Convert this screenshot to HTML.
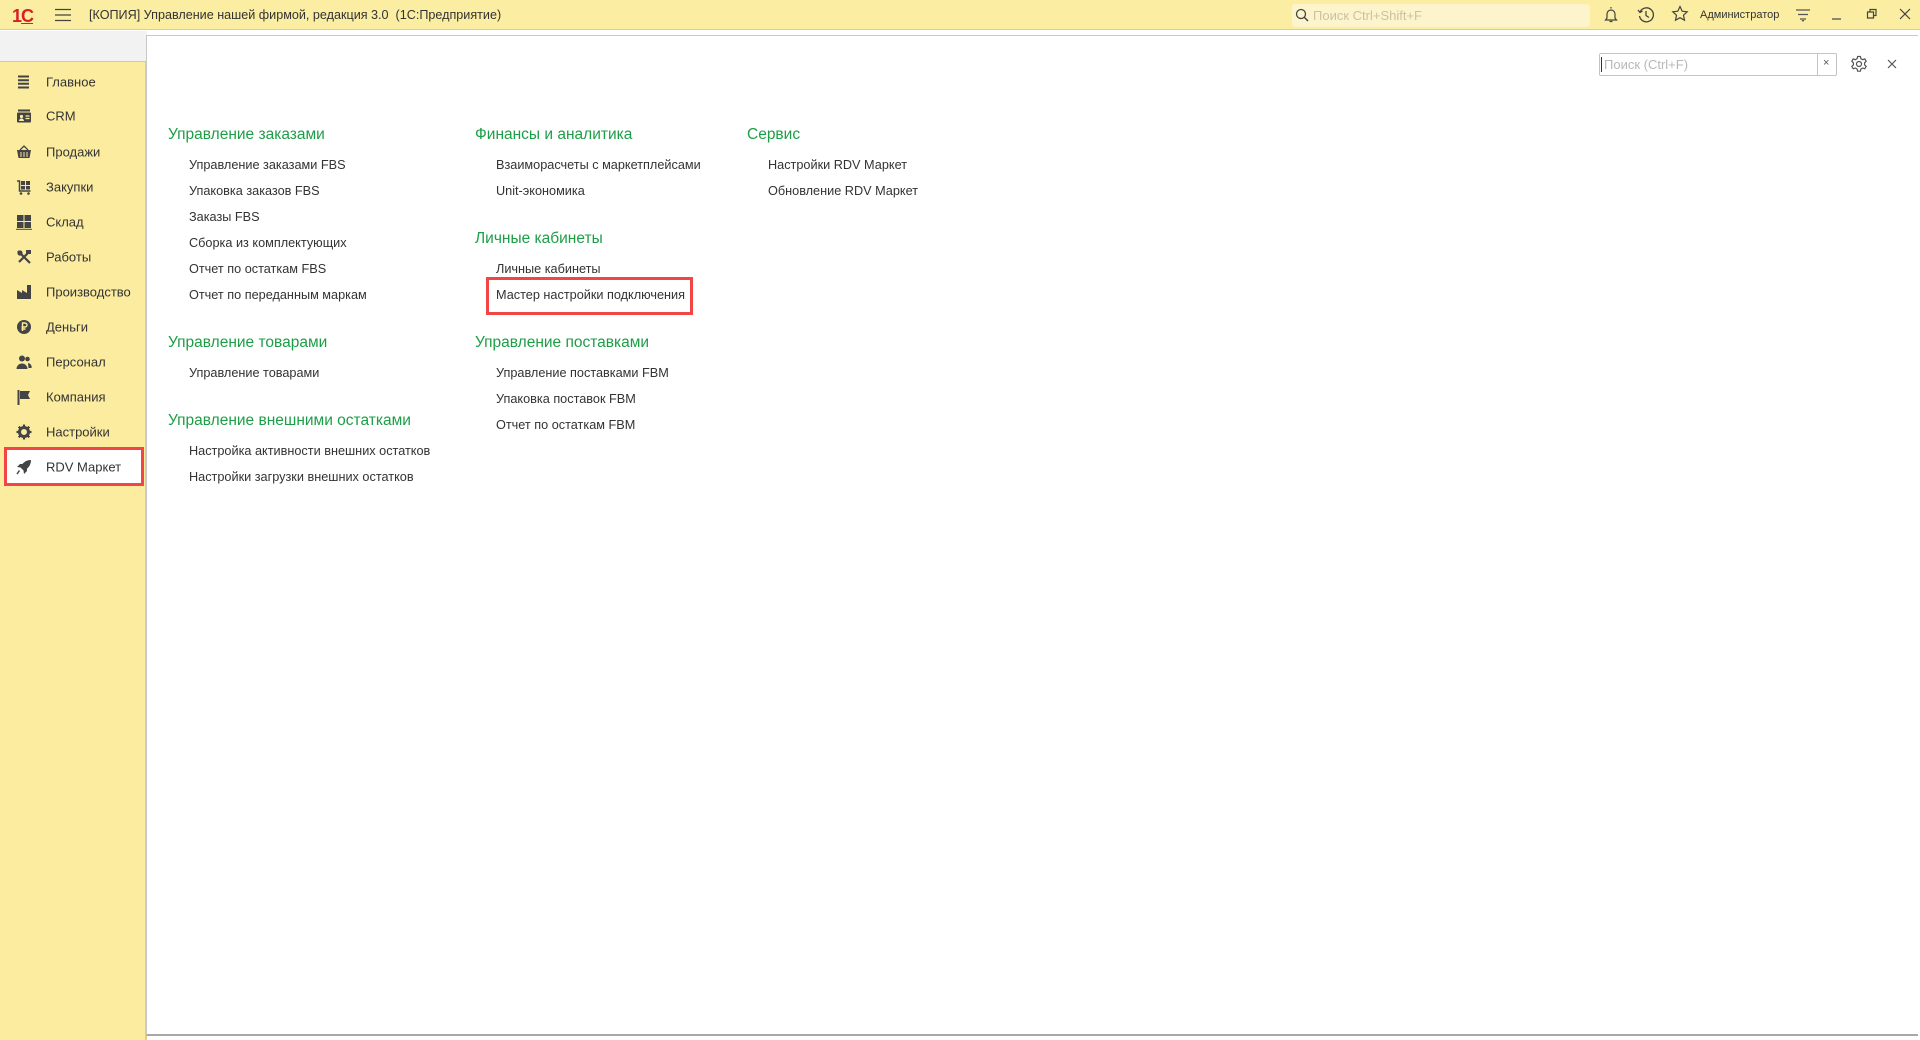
<!DOCTYPE html>
<html><head><meta charset="utf-8"><style>
*{margin:0;padding:0;box-sizing:border-box}
body{width:1920px;height:1040px;overflow:hidden;background:#fff;font-family:"Liberation Sans",Arial,sans-serif;position:relative;color:#333}
.a{position:absolute}
#top{left:0;top:0;width:1920px;height:30px;background:#fbeda1;border-bottom:1px solid #e2cf79}
#title{left:89px;top:8px;font-size:12.6px;color:#333;white-space:nowrap}
#gs{left:1292px;top:4px;width:298px;height:23px;background:#fdf4cc;border-radius:3px;font-size:13px;color:#c9c2a4;padding:4px 0 0 21px}
#side{left:0;top:62px;width:147px;height:978px;background:#fbeca0;border-right:2px solid #e6cf70}
#gray{left:0;top:31px;width:147px;height:31px;background:#f2f2f2;border-bottom:1px solid #c8c8c8}
#panel{left:146px;top:35px;width:1772px;height:1001px;border:1px solid #c8c8c8;border-right:none;border-bottom:2px solid #a8a8a8;background:#fff}
.mi{position:absolute;left:46px;font-size:13px;color:#333;transform:translateY(-50%)}
.ic{position:absolute;left:16px;width:16px;height:16px;transform:translateY(-50%)}
.h{position:absolute;font-size:15.5px;color:#1c9e47;transform:translateY(-50%);white-space:nowrap}
.it{position:absolute;font-size:12.7px;color:#333;transform:translateY(-50%);white-space:nowrap}
.rb{position:absolute;border:3px solid #f24545}
</style></head><body>
<div id="top" class="a"></div>
<div class="a" style="left:12px;top:6px;font-size:18px;font-weight:bold;color:#d81f26;letter-spacing:-1px">1<span style="text-decoration:underline">С</span></div>
<svg class="a" style="left:55px;top:8px" width="16" height="14"><path d="M0 1.5H16M0 7H16M0 12.5H16" stroke="#444" stroke-width="1.3"/></svg>
<div id="title" class="a">[КОПИЯ] Управление нашей фирмой, редакция 3.0 &nbsp;(1С:Предприятие)</div>
<div id="gs" class="a">Поиск Ctrl+Shift+F</div>
<svg class="a" style="left:1295px;top:8px" width="14" height="14"><circle cx="6" cy="6" r="4.5" fill="none" stroke="#444" stroke-width="1.3"/><path d="M9 9l4 4" stroke="#444" stroke-width="1.5"/></svg>
<svg class="a" style="left:1603px;top:6px" width="16" height="18"><path d="M8 1v1.5M4 12V8a4 4 0 018 0v4l1.5 2h-11z M6.5 15.5h3" fill="none" stroke="#444" stroke-width="1.2"/></svg>
<svg class="a" style="left:1637px;top:6px" width="18" height="18"><path d="M3 6a7 7 0 11-.5 4 M1 4l2 2.5 2.5-1.5 M9 5v4.5l3 2" fill="none" stroke="#444" stroke-width="1.3"/></svg>
<svg class="a" style="left:1671px;top:5px" width="18" height="18"><path d="M9 1.5l2.2 4.7 5 .6-3.7 3.4 1 5L9 12.7 4.5 15.2l1-5L1.8 6.8l5-.6z" fill="none" stroke="#444" stroke-width="1.2"/></svg>
<div class="a" style="left:1700px;top:9px;font-size:11px;color:#333">Администратор</div>
<svg class="a" style="left:1795px;top:8px" width="16" height="15"><path d="M1 2h14M3 6.5h10M5 11h6" stroke="#555" stroke-width="1.2"/><path d="M6.5 12l1.5 2 1.5-2z" fill="#555"/></svg>
<svg class="a" style="left:1831px;top:8px" width="12" height="12"><path d="M1 11H10" stroke="#444" stroke-width="1.2"/></svg>
<svg class="a" style="left:1866px;top:8px" width="12" height="12"><path d="M1.5 4h6v6h-6zM4 4V1.5h6v6H7.5" fill="none" stroke="#444" stroke-width="1.2"/></svg>
<svg class="a" style="left:1899px;top:8px" width="12" height="12"><path d="M1 1l10 10M11 1L1 11" stroke="#444" stroke-width="1.2"/></svg>

<div id="gray" class="a"></div>
<div id="side" class="a"></div>
<div id="panel" class="a"></div>

<div class="a" style="left:4px;top:448px;width:140px;height:38px;background:#fff"></div>
<svg class="ic" style="top:82px" viewBox="0 0 16 16"><path d="M2 2.5h11M2 6.2h11M2 9.8h11M2 13.5h11" stroke="#444" stroke-width="2"/></svg><div class="mi" style="top:82px">Главное</div>
<svg class="ic" style="top:116px" viewBox="0 0 16 16"><rect x="2" y="1.5" width="12" height="2" fill="#444"/><rect x="1" y="4.5" width="14" height="10" rx="1" fill="#444"/><circle cx="5.5" cy="8.5" r="1.6" fill="#fbeca0"/><path d="M3 13a2.5 2.5 0 015 0z" fill="#fbeca0"/><path d="M9.5 8h4M9.5 10.5h4" stroke="#fbeca0" stroke-width="1.2"/></svg><div class="mi" style="top:116px">CRM</div>
<svg class="ic" style="top:152px" viewBox="0 0 16 16"><path d="M4 6l4-4 4 4" fill="none" stroke="#444" stroke-width="1.3"/><path d="M1 6h14l-1.5 8h-11z" fill="#444"/><path d="M5 8v5M8 8v5M11 8v5" stroke="#fbeca0" stroke-width="1"/></svg><div class="mi" style="top:152px">Продажи</div>
<svg class="ic" style="top:187px" viewBox="0 0 16 16"><path d="M1 2h2.5v10h11" fill="none" stroke="#444" stroke-width="1.5"/><rect x="5" y="2" width="4" height="4" fill="#444"/><rect x="10" y="2" width="4" height="4" fill="#444"/><rect x="5" y="7" width="4" height="3.5" fill="#444"/><rect x="10" y="7" width="4" height="3.5" fill="#444"/><circle cx="5" cy="14.5" r="1.3" fill="#444"/><circle cx="12.5" cy="14.5" r="1.3" fill="#444"/></svg><div class="mi" style="top:187px">Закупки</div>
<svg class="ic" style="top:222px" viewBox="0 0 16 16"><rect x="1" y="1" width="6.5" height="6" fill="#444"/><rect x="8.5" y="1" width="6.5" height="6" fill="#444"/><rect x="1" y="8" width="6.5" height="6" fill="#444"/><rect x="8.5" y="8" width="6.5" height="6" fill="#444"/><path d="M0 15.3h16" stroke="#444"/></svg><div class="mi" style="top:222px">Склад</div>
<svg class="ic" style="top:257px" viewBox="0 0 16 16"><path d="M2 2l12 12M14 2L3 13" stroke="#444" stroke-width="2.2"/><circle cx="4" cy="4" r="2.6" fill="#444"/><rect x="10" y="1" width="5" height="4" fill="#444"/></svg><div class="mi" style="top:257px">Работы</div>
<svg class="ic" style="top:292px" viewBox="0 0 16 16"><path d="M1 15V6l5 3V6l5 3V1h4v14z" fill="#444"/></svg><div class="mi" style="top:292px">Производство</div>
<svg class="ic" style="top:327px" viewBox="0 0 16 16"><circle cx="8" cy="8" r="7" fill="#444"/><path d="M6.5 12V4h2.5a2 2 0 010 4H5.5M5.5 10h4" fill="none" stroke="#fbeca0" stroke-width="1.4"/></svg><div class="mi" style="top:327px">Деньги</div>
<svg class="ic" style="top:362px" viewBox="0 0 16 16"><circle cx="6" cy="4.5" r="3" fill="#444"/><path d="M0.5 15a5.5 5.5 0 0111 0z" fill="#444"/><circle cx="11.5" cy="5" r="2.3" fill="#444"/><path d="M12 9a4 4 0 013.5 5h-3" fill="#444"/></svg><div class="mi" style="top:362px">Персонал</div>
<svg class="ic" style="top:397px" viewBox="0 0 16 16"><path d="M2.5 1v15" stroke="#444" stroke-width="2"/><path d="M4 2h10l-2 4 2 4H4z" fill="#444"/></svg><div class="mi" style="top:397px">Компания</div>
<svg class="ic" style="top:432px" viewBox="0 0 16 16"><circle cx="8" cy="8" r="4.5" fill="none" stroke="#444" stroke-width="3"/><path d="M8 0.5v3M8 12.5v3M0.5 8h3M12.5 8h3M2.7 2.7l2.1 2.1M11.2 11.2l2.1 2.1M2.7 13.3l2.1-2.1M11.2 4.8l2.1-2.1" stroke="#444" stroke-width="2.2"/></svg><div class="mi" style="top:432px">Настройки</div>
<svg class="ic" style="top:467px" viewBox="0 0 16 16"><path d="M15 1C10 1 6 4 4.5 8.5l3 3C12 10 15 6 15 1z" fill="#444"/><path d="M4.5 8.5L1 8l3-3h3zM7.5 11.5L8 15l3-3V9z" fill="#444"/><path d="M3.5 11.5L1 15" stroke="#444" stroke-width="1.5"/></svg><div class="mi" style="top:467px">RDV Маркет</div>
<div class="rb" style="left:4px;top:447px;width:140px;height:39px"></div>

<div class="a" style="left:1599px;top:53px;width:238px;height:23px;border:1px solid #c4c4c4;border-radius:2px;background:#fff"></div>
<div class="a" style="left:1601px;top:57px;width:1px;height:15px;background:#333"></div>
<div class="a" style="left:1604px;top:57px;font-size:13px;color:#b8b8b8">Поиск (Ctrl+F)</div>
<div class="a" style="left:1817px;top:53px;width:1px;height:23px;background:#c4c4c4"></div>
<div class="a" style="left:1823px;top:57px;font-size:11px;color:#555">×</div>
<svg class="a" style="left:1850px;top:55px" width="18" height="18" viewBox="0 0 18 18"><circle cx="9" cy="9" r="2.5" fill="none" stroke="#555" stroke-width="1.2"/><path d="M7.6 1.5h2.8l.5 2.2 1.8 1 2.1-.8 1.4 2.4-1.6 1.5v2.1l1.6 1.5-1.4 2.4-2.1-.8-1.8 1-.5 2.2H7.6l-.5-2.2-1.8-1-2.1.8-1.4-2.4 1.6-1.5V7.8L1.8 6.3l1.4-2.4 2.1.8 1.8-1z" fill="none" stroke="#555" stroke-width="1.2"/></svg>
<svg class="a" style="left:1887px;top:59px" width="10" height="10"><path d="M1 1l8 8M9 1L1 9" stroke="#555" stroke-width="1.2"/></svg>

<div class="h" style="left:168px;top:135px">Управление заказами</div>
<div class="it" style="left:189px;top:165px">Управление заказами FBS</div>
<div class="it" style="left:189px;top:191px">Упаковка заказов FBS</div>
<div class="it" style="left:189px;top:217px">Заказы FBS</div>
<div class="it" style="left:189px;top:243px">Сборка из комплектующих</div>
<div class="it" style="left:189px;top:269px">Отчет по остаткам FBS</div>
<div class="it" style="left:189px;top:295px">Отчет по переданным маркам</div>
<div class="h" style="left:168px;top:343px">Управление товарами</div>
<div class="it" style="left:189px;top:373px">Управление товарами</div>
<div class="h" style="left:168px;top:421px">Управление внешними остатками</div>
<div class="it" style="left:189px;top:451px">Настройка активности внешних остатков</div>
<div class="it" style="left:189px;top:477px">Настройки загрузки внешних остатков</div>
<div class="h" style="left:475px;top:135px">Финансы и аналитика</div>
<div class="it" style="left:496px;top:165px">Взаиморасчеты с маркетплейсами</div>
<div class="it" style="left:496px;top:191px">Unit-экономика</div>
<div class="h" style="left:475px;top:239px">Личные кабинеты</div>
<div class="it" style="left:496px;top:269px">Личные кабинеты</div>
<div class="it" style="left:496px;top:295px">Мастер настройки подключения</div>
<div class="rb" style="left:486px;top:277px;width:207px;height:38px"></div>
<div class="h" style="left:475px;top:343px">Управление поставками</div>
<div class="it" style="left:496px;top:373px">Управление поставками FBM</div>
<div class="it" style="left:496px;top:399px">Упаковка поставок FBM</div>
<div class="it" style="left:496px;top:425px">Отчет по остаткам FBM</div>
<div class="h" style="left:747px;top:135px">Сервис</div>
<div class="it" style="left:768px;top:165px">Настройки RDV Маркет</div>
<div class="it" style="left:768px;top:191px">Обновление RDV Маркет</div>
</body></html>
